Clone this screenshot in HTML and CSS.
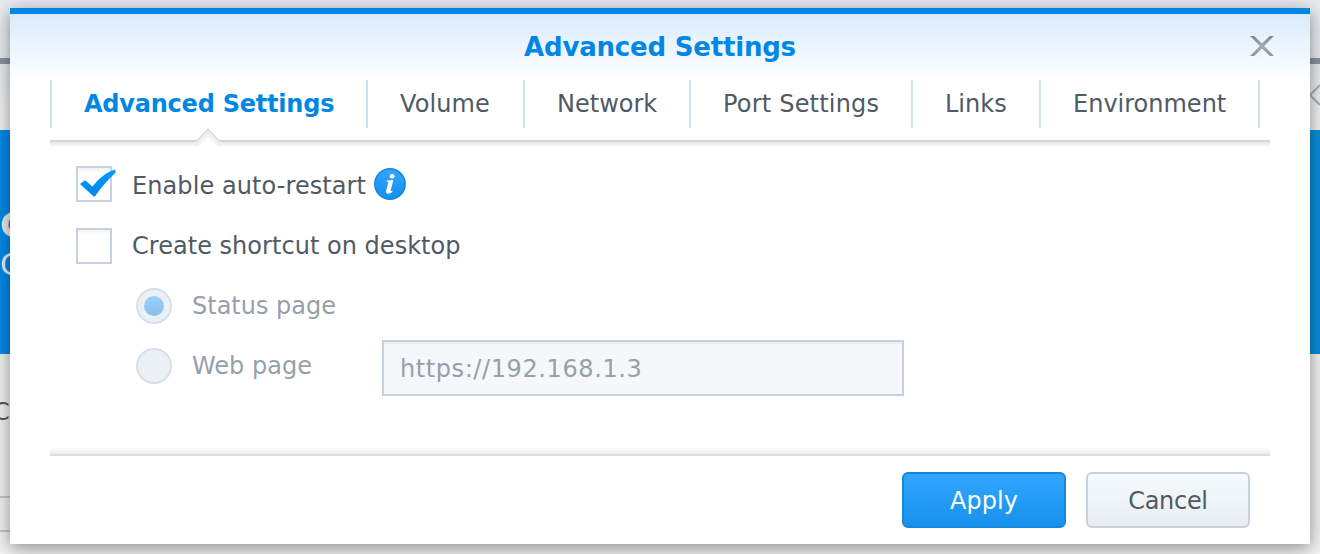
FILE: index.html
```
<!DOCTYPE html>
<html lang="en">
<head>
<meta charset="utf-8">
<title>Advanced Settings</title>
<link rel="stylesheet" href="styles.css">
</head>
<body>
<div class="backdrop" aria-hidden="true">
  <div class="back-title"></div>
  <div class="back-toolbar"><svg class="back-close" width="24" height="24" viewBox="0 0 24 24"><path d="M2 2 22 22M22 2 2 22"/></svg></div>
  <div class="back-hero"><span class="hero-name">C</span><span class="hero-sub">C</span></div>
  <div class="back-body"><span class="back-label">C</span><div class="back-row"></div></div>
</div>
<section class="dialog">
  <header class="dialog-header">
    <h1 class="dialog-title"><span class="t-title">Advanced Settings</span></h1>
    <svg class="close" width="26" height="24" viewBox="0 0 26 24">
      <defs><linearGradient id="x" x1="0" y1="0" x2="0" y2="1"><stop offset="0" stop-color="#7d8690"/><stop offset=".5" stop-color="#a4adb7"/><stop offset="1" stop-color="#8d96a1"/></linearGradient></defs>
      <path fill="#fff" d="M1 3H5L13 10.4 21 3H25L15.2 12 25 23H21L13 14 5 23H1L10.800 12Z"/>
      <path fill="url(#x)" d="M1 2H5.200L13 9.400 20.800 2H25L15.200 12 25 22H20.800L13 14.600 5.200 22H1L10.800 12Z"/>
    </svg>
  </header>
  <nav class="tabs">
    <a class="tab active"><span class="t-active">Advanced Settings</span></a>
    <a class="tab"><span class="t-volume">Volume</span></a>
    <a class="tab"><span class="t-network">Network</span></a>
    <a class="tab"><span class="t-port">Port Settings</span></a>
    <a class="tab"><span class="t-links">Links</span></a>
    <a class="tab"><span class="t-env">Environment</span></a>
  </nav>
  <main class="panel">
    <svg class="pointer" width="28" height="20" viewBox="0 0 28 20">
      <path fill="#fff" d="M1 14 14 1 27 14V20H1Z"/>
      <path fill="none" stroke="#f7f7f7" stroke-width="2" d="M3 19 14 8 25 19"/>
      <path fill="none" stroke="#ededed" stroke-width="2" d="M1 17.500 14 4.500 27 17.500"/>
      <path fill="none" stroke="#d9d9d9" stroke-width="1.600" d="M1 14.500 14 1.500 27 14.500"/>
    </svg>
    <div class="row">
      <span class="check"><svg class="tick" width="40" height="32" viewBox="0 0 40 32"><defs><linearGradient id="t" x1="0" y1="0" x2="0" y2="1"><stop offset="0" stop-color="#0098ff"/><stop offset="1" stop-color="#0086e5"/></linearGradient></defs><path fill="url(#t)" d="M2 16 7 12.200 14.500 18.500C20.500 11 28 4 37.200 1.500L37.600 4.500C30 11.500 23 19.500 17.200 28Q16.300 29 15.200 28Z"/></svg></span>
      <span class="label t-auto">Enable auto-restart</span>
      <svg class="info" width="32" height="32" viewBox="0 0 32 32"><defs><linearGradient id="i" x1="0" y1="0" x2="0" y2="1"><stop offset="0" stop-color="#32a6ff"/><stop offset="1" stop-color="#1290ea"/></linearGradient></defs><circle cx="16" cy="16" r="15.200" fill="url(#i)" stroke="#1985d8" stroke-width="1.500"/><g fill="#fff"><circle cx="18.100" cy="8.300" r="2.400"/><path d="M12.800 12.400 19.400 11.900 16.600 22.500Q16.400 23.600 18.600 22.500L18.300 23.900C15.500 26.200 11.200 26.500 12 23.100L14.300 14.600Q14.500 13.600 12.600 13.600Z"/></g></svg>
    </div>
    <div class="row"><span class="check"></span><span class="label t-create">Create shortcut on desktop</span></div>
    <div class="row sub"><span class="radio on"></span><span class="label t-status">Status page</span></div>
    <div class="row sub"><span class="radio"></span><span class="label t-web">Web page</span><span class="field"><span class="t-url">https://192.168.1.3</span></span></div>
  </main>
  <footer class="footer">
    <button class="button primary"><span class="t-apply">Apply</span></button>
    <button class="button"><span class="t-cancel">Cancel</span></button>
  </footer>
</section>
</body>
</html>
```
FILE: styles.css
```
* { box-sizing: border-box; }
body { margin: 0; width: 1320px; height: 554px; overflow: hidden; position: relative; font: 24px/30px Verdana, "DejaVu Sans", sans-serif; color: #505a64; background: #f5f5f5; }
.backdrop { height: 554px; }
.back-title { height: 64px; background: #e9edf1; border-bottom: 6px solid #8c95a2; }
.back-toolbar { height: 66px; background: linear-gradient(#e9eef2, #f5f5f5); display: flex; justify-content: flex-end; padding-top: 19px; }
.back-close { margin-right: -2px; fill: none; stroke: #aab1b9; stroke-width: 2; }
.back-hero { height: 224px; background: linear-gradient(90deg, #008ceb 0 1310px, #0690df 1310px); display: flex; flex-direction: column; color: #f2f2f2; padding-top: 77px; }
.hero-name { font-size: 34px; font-weight: bold; line-height: 36px; }
.hero-sub { font-size: 30px; line-height: 44px; }
.back-body { height: 200px; padding-top: 43px; }
.back-label { display: block; margin-left: -7px; }
.back-row { margin-top: 69px; width: 660px; height: 36px; border: solid #c0c8d3; border-width: 2px 0; }
.dialog { position: absolute; left: 10px; top: 8px; width: 1300px; height: 536px; background: #fff; border-top: 6px solid #0086e5; box-shadow: 0 4px 18px rgba(0,0,0,.45); }
.dialog-header { height: 66px; display: grid; grid-template-columns: 60px 1fr 60px; background: linear-gradient(#d9ebf9, #edf6ff 55%, #fff); }
.dialog-title { margin: 18px 0 0; grid-column: 2; text-align: center; font-size: 26px; line-height: 30px; color: #0086e5; letter-spacing: -.2px; }
.close { margin: 20px 0 0 -1px; }
.tabs { margin-left: 40px; width: 1210px; height: 60px; display: grid; grid-template-columns: 316px 157px 166px 222px 128px 221px; }
.tab { height: 48px; border-left: 2px solid #d4e1ed; padding: 9px 0 0 32px; line-height: 30px; white-space: nowrap; }
.tab:last-child { border-right: 2px solid #d4e1ed; }
.active { color: #0086e5; font-weight: bold; letter-spacing: -.22px; }
.t-port { letter-spacing: .2px; }
.t-volume { letter-spacing: .1px; }
.panel { position: relative; margin: 0 40px; height: 316px; padding: 14px 26px 0; border-top: 2px solid #d4d4d4; border-bottom: 2px solid #dcdcdc; background: linear-gradient(#e5e5e5, #fff) top/100% 5px no-repeat, linear-gradient(#fff, #ebebeb) bottom/100% 7px no-repeat; }
.pointer { position: absolute; left: 144px; top: -14px; }
.row { height: 60px; display: flex; align-items: center; white-space: nowrap; }
.check { width: 36px; height: 36px; margin-bottom: 4px; border: 2px solid #c6d1dd; background: linear-gradient(#f2f2f2, #fff 5px); position: relative; }
.row:nth-of-type(2) .check { margin-bottom: 0; top: 0; }
.tick { position: absolute; left: 0; top: 0; }
.label { margin-left: 20px; }
.t-auto { letter-spacing: .08px; }
.t-create { letter-spacing: .03px; }
.info { margin: 0 0 4px 8px; }
.sub { padding-left: 60px; color: #969faa; }
.radio { width: 36px; height: 36px; border: 2px solid #d5e0eb; border-radius: 50%; background: #ebf0f5; padding: 6px; }
.on::before { content: ""; display: block; width: 20px; height: 20px; border-radius: 50%; background: linear-gradient(#99d0fb, #88bfeb); }
.field { margin: 4px 0 0 70px; width: 522px; height: 56px; border: 2px solid #c6d1dd; background: linear-gradient(#eceeef 2px, #f5f7fa 2px); padding: 12px 16px; }
.t-url { letter-spacing: .6px; }
.footer { height: 86px; display: flex; justify-content: flex-end; gap: 20px; padding: 16px 60px 0; }
.button { width: 164px; height: 56px; border: 2px solid #c6d1dd; border-radius: 6px; background: linear-gradient(#f5faff, #e9eef3); color: #505a64; font: inherit; padding: 2px 0 0; }
.primary { border-color: #1886d9; background: linear-gradient(#32a6ff, #1692ec); color: #fff; }
.t-cancel { letter-spacing: -.3px; }
```
